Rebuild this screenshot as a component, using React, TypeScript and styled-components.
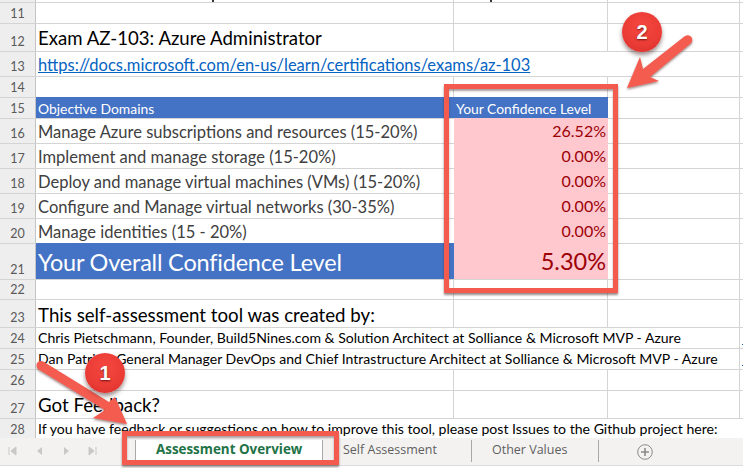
import React from 'react';
import styled, { createGlobalStyle } from 'styled-components';

const GlobalStyle = createGlobalStyle`
  html, body {
    margin: 0;
    padding: 0;
    background: #ffffff;
  }
  body {
    font-family: "Lato", "Liberation Sans", sans-serif;
  }
`;

const Page = styled.div`
  position: relative;
  width: 743px;
  height: 468px;
  overflow: hidden;
  background: #ffffff;
`;

const Sheet = styled.div`
  display: flex;
  flex-direction: column;
  height: 438px;
  overflow: hidden;
`;

const Row = styled.div<{ $h: number }>`
  display: grid;
  grid-template-columns: 36px 418px 154px 132px 3px;
  height: ${({ $h }) => $h}px;
  flex: none;
  box-sizing: border-box;
  border-top: 1px solid #d4d4d4;
`;

const ClippedRow = styled(Row)`
  border-top: 0;
`;

const RowHead = styled.div`
  display: flex;
  align-items: flex-end;
  justify-content: center;
  padding-bottom: 1px;
  background: #eeeeee;
  border-right: 1px solid #c4c4c4;
  color: #5a5a5a;
  font-size: 12.5px;
  line-height: 16px;
`;

const Cell = styled.div<{ $line?: boolean; $bg?: string }>`
  box-sizing: border-box;
  min-width: 0;
  background: ${({ $bg }) => $bg ?? 'transparent'};
  border-right: ${({ $line }) => ($line ? '1px solid #d4d4d4' : '0')};
`;

const Descender = styled.div<{ $left: number }>`
  width: 2px;
  height: 2px;
  margin-left: ${({ $left }) => $left}px;
  background: #333333;
`;

const TextCell = styled(Cell)<{ $size: number; $color?: string; $spacing?: number; $pb?: number }>`
  display: flex;
  align-items: flex-end;
  padding: 0 0 ${({ $pb }) => $pb ?? 0}px 2px;
  white-space: nowrap;
  font-size: ${({ $size }) => $size}px;
  color: ${({ $color }) => $color ?? '#000000'};
  letter-spacing: ${({ $spacing }) => $spacing ?? 0}px;
  line-height: 1.2;
`;

const BlueCell = styled(TextCell)`
  margin-top: -1px;
  background: #4472c4;
  color: #ffffff;
`;

const LinkText = styled.a`
  color: #0563c1;
  text-decoration: underline;
`;

const LinkStub = styled.div`
  align-self: end;
  width: 1px;
  height: 1px;
  margin: 0 0 3px 2px;
  background: #0563c1;
`;

const ValueCell = styled.div<{ $size: number; $spacing?: number }>`
  display: flex;
  align-items: center;
  justify-content: flex-end;
  margin-top: -1px;
  padding-right: 2px;
  background: #ffc7ce;
  color: #9c0006;
  font-size: ${({ $size }) => $size}px;
  letter-spacing: ${({ $spacing }) => $spacing ?? 0}px;
`;

const TabBar = styled.div`
  display: flex;
  align-items: stretch;
  height: 28px;
  box-sizing: border-box;
  background: #f3f2f1;
  border-bottom: 1px solid #dcdcdc;
`;

const NavButtons = styled.div`
  display: flex;
  align-items: center;
  gap: 17px;
  width: 135px;
  padding: 0 0 2px 7px;
  box-sizing: border-box;
  color: #c8c8c8;
`;

const Tab = styled.div<{ $active?: boolean; $w: number }>`
  display: flex;
  align-items: center;
  width: ${({ $w }) => $w}px;
  box-sizing: border-box;
  margin: 2px 0 3px;
  padding: 0 0 4px 20px;
  border-right: 1px solid #a8a8a8;
  background: ${({ $active }) => ($active ? '#ffffff' : 'transparent')};
  border-left: ${({ $active }) => ($active ? '1px solid #a8a8a8' : '0')};
  color: ${({ $active }) => ($active ? '#217346' : '#5f5f5f')};
  font-family: "Open Sans", "Liberation Sans", sans-serif;
  font-size: ${({ $active }) => ($active ? 13.4 : 12.5)}px;
  font-weight: ${({ $active }) => ($active ? 700 : 400)};
`;

const AddTab = styled.div`
  display: flex;
  align-items: center;
  margin-left: 38px;
`;

const RedBox = styled.div<{ $x: number; $y: number; $w: number; $h: number }>`
  position: absolute;
  left: ${({ $x }) => $x}px;
  top: ${({ $y }) => $y}px;
  width: ${({ $w }) => $w}px;
  height: ${({ $h }) => $h}px;
  box-sizing: border-box;
  border: 5px solid #f45b4f;
  box-shadow: 0 2px 2px rgba(70, 40, 40, 0.55), inset 0 2px 2px rgba(70, 40, 40, 0.45);
`;

const Badge = styled.div<{ $x: number; $y: number }>`
  position: absolute;
  left: ${({ $x }) => $x}px;
  top: ${({ $y }) => $y}px;
  display: flex;
  align-items: center;
  justify-content: center;
  width: 40px;
  height: 40px;
  border-radius: 50%;
  background: radial-gradient(circle at 50% 35%, #f4483f 0%, #ea3b35 60%, #d42d2b 100%);
  box-shadow: 0 3px 4px rgba(60, 30, 30, 0.5);
  color: #ffffff;
  font-family: "Liberation Sans", sans-serif;
  font-size: 20px;
  font-weight: 700;
  text-shadow: 0 1px 2px rgba(60, 0, 0, 0.7);
`;

const ArrowLayer = styled.svg`
  position: absolute;
  left: 0;
  top: 0;
  pointer-events: none;
`;

const rows = [
  { n: 16, label: 'Manage Azure subscriptions and resources (15-20%)', value: '26.52%' },
  { n: 17, label: 'Implement and manage storage (15-20%)', value: '0.00%' },
  { n: 18, label: 'Deploy and manage virtual machines (VMs) (15-20%)', value: '0.00%' },
  { n: 19, label: 'Configure and Manage virtual networks (30-35%)', value: '0.00%' },
  { n: 20, label: 'Manage identities (15 - 20%)', value: '0.00%' },
];

const EmptyRow = ({ n, h }: { n: number; h: number }) => (
  <Row $h={h}>
    <RowHead>{n}</RowHead>
    <Cell $line />
    <Cell $line />
    <Cell $line />
  </Row>
);

const Arrow = ({ d }: { d: string }) => (
  <path d={d} fill="#f45b4f" filter="url(#arrowShadow)" />
);

export default function App() {
  return (
    <Page>
      <GlobalStyle />
      <Sheet>
        <ClippedRow $h={2}>
          <RowHead />
          <Cell $line><Descender $left={176} /></Cell>
          <Cell $line><Descender $left={36} /></Cell>
          <Cell $line />
        </ClippedRow>
        <EmptyRow n={11} h={21} />
        <Row $h={28}>
          <RowHead>12</RowHead>
          <TextCell $size={18.6} $pb={2} $line>Exam AZ-103: Azure Administrator</TextCell>
          <Cell $line />
          <Cell $line />
        </Row>
        <Row $h={25}>
          <RowHead>13</RowHead>
          <TextCell $size={16.5}>
            <LinkText>https://docs.microsoft.com/en-us/learn/certifications/exams/az-103</LinkText>
          </TextCell>
          <Cell />
          <Cell $line />
        </Row>
        <EmptyRow n={14} h={21} />
        <Row $h={21}>
          <RowHead>15</RowHead>
          <BlueCell $size={13.9}>Objective Domains</BlueCell>
          <BlueCell $size={13.9}>Your Confidence Level</BlueCell>
          <Cell $line />
        </Row>
        {rows.map((r) => (
          <Row key={r.n} $h={25}>
            <RowHead>{r.n}</RowHead>
            <TextCell $size={16.55} $color="#404040">{r.label}</TextCell>
            <ValueCell $size={16}>{r.value}</ValueCell>
            <Cell $line />
          </Row>
        ))}
        <Row $h={36}>
          <RowHead>21</RowHead>
          <BlueCell $size={23.5} $spacing={-0.2} $pb={3}>Your Overall Confidence Level</BlueCell>
          <ValueCell $size={23.5}>5.30%</ValueCell>
          <Cell $line />
        </Row>
        <EmptyRow n={22} h={20} />
        <Row $h={28}>
          <RowHead>23</RowHead>
          <TextCell $size={18.7} $pb={1} $line>This self-assessment tool was created by:</TextCell>
          <Cell $line />
          <Cell $line />
        </Row>
        <Row $h={21}>
          <RowHead>24</RowHead>
          <TextCell $size={14.05} $pb={1}>Chris Pietschmann, Founder, Build5Nines.com &amp; Solution Architect at Solliance &amp; Microsoft MVP - Azure</TextCell>
          <Cell />
          <Cell $line />
          <LinkStub />
        </Row>
        <Row $h={21}>
          <RowHead>25</RowHead>
          <TextCell $size={14.05} $pb={1}>Dan Patrick, General Manager DevOps and Chief Intrastructure Architect at Solliance &amp; Microsoft MVP - Azure</TextCell>
          <Cell />
          <Cell $line />
          <LinkStub />
        </Row>
        <EmptyRow n={26} h={21} />
        <Row $h={28}>
          <RowHead>27</RowHead>
          <TextCell $size={18.7} $pb={2} $line>Got Feedback?</TextCell>
          <Cell $line />
          <Cell $line />
        </Row>
        <Row $h={21}>
          <RowHead>28</RowHead>
          <TextCell $size={14.1} $pb={1}>If you have feedback or suggestions on how to improve this tool, please post Issues to the Github project here:</TextCell>
          <Cell />
          <Cell />
        </Row>
      </Sheet>
      <TabBar>
        <NavButtons>
          <svg width="10" height="10" viewBox="0 0 10 10"><path d="M2 1v8M9 1L4 5l5 4z" fill="currentColor" stroke="currentColor" /></svg>
          <svg width="10" height="10" viewBox="0 0 10 10"><path d="M8 1L3 5l5 4z" fill="currentColor" /></svg>
          <svg width="10" height="10" viewBox="0 0 10 10"><path d="M3 1l5 4-5 4z" fill="currentColor" /></svg>
          <svg width="10" height="10" viewBox="0 0 10 10"><path d="M8 1v8M1 1l5 4-5 4z" fill="currentColor" stroke="currentColor" /></svg>
        </NavButtons>
        <Tab $active $w={188}>Assessment Overview</Tab>
        <Tab $w={149}>Self Assessment</Tab>
        <Tab $w={127}>Other Values</Tab>
        <AddTab>
          <svg width="16" height="16" viewBox="0 0 16 16" fill="none" stroke="#8a8a8a">
            <circle cx="8" cy="8" r="7.3" />
            <path d="M8 4v8M4 8h8" strokeWidth="1.6" />
          </svg>
        </AddTab>
      </TabBar>

      <RedBox $x={444} $y={84} $w={174} $h={209} />
      <RedBox $x={122} $y={431} $w={217} $h={34} />
      <ArrowLayer width="743" height="468" viewBox="0 0 743 468">
        <defs>
          <filter id="arrowShadow" x="-20%" y="-20%" width="140%" height="140%">
            <feDropShadow dx="0" dy="1.5" stdDeviation="1" floodColor="#5a3030" floodOpacity="0.6" />
          </filter>
        </defs>
        <Arrow d="M627 88 L640 57 L643 69 L685 36 Q690 34 692 38 Q693 42 690 44 L650 77 L659 81 Z" />
        <Arrow d="M127 424 L93 418 L105 410 L38 369 Q35 365 38 362 Q41 360 44 362 L109 402 L115 397 Z" />
      </ArrowLayer>
      <Badge $x={622} $y={12}>2</Badge>
      <Badge $x={85} $y={353}>1</Badge>
    </Page>
  );
}
